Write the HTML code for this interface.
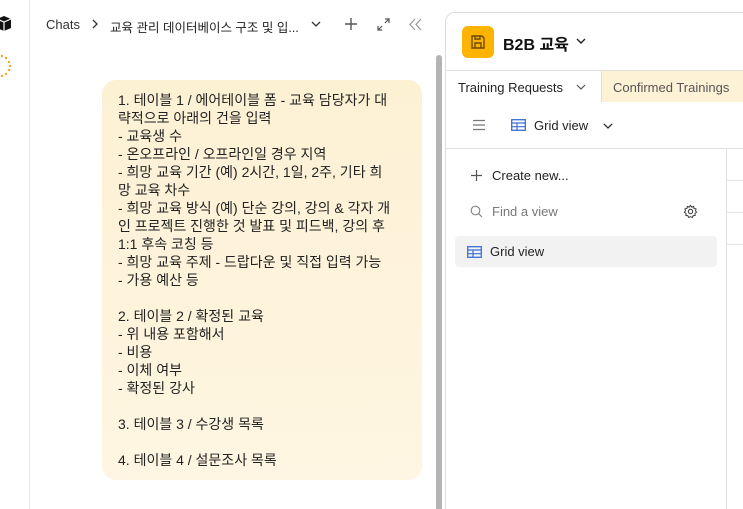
<!DOCTYPE html>
<html><head><meta charset="utf-8"><style>
*{margin:0;padding:0;box-sizing:border-box}
html,body{width:743px;height:509px;overflow:hidden}
body{background:#fff;font-family:"Liberation Sans","Noto Sans CJK KR",sans-serif;color:#1d1d1f;position:relative}
.abs{position:absolute}
.side{left:0;top:0;width:30px;height:509px;border-right:1px solid #e8e8e8;background:#fff}
.bubble{left:102px;top:80px;width:320px;height:400px;border-radius:14px;background:linear-gradient(180deg,#fdf1d4,#fef6e2);padding:11px 16px;font-size:14px;line-height:18px;color:#222;white-space:nowrap}
.right{left:445px;top:12px;width:310px;height:520px;border:1px solid #dcdcdc;border-radius:10px 0 0 0;background:#fff}
</style></head><body>
<div class="abs side">
<svg class="abs" style="left:-5px;top:14px" width="18" height="20" viewBox="0 0 18 20"><path d="M2 5 L9 2 L16 5 L16 14 L9 17 L2 14Z" fill="#111"/><path d="M2 5 L9 8 L16 5 M9 8 V17" stroke="#fff" stroke-width="1.2" fill="none"/></svg>
<svg class="abs" style="left:-4px;top:54px" width="20" height="24" viewBox="0 0 20 24"><g fill="#f5a623"><circle cx="6" cy="2" r="1.2"/><circle cx="10" cy="4" r="1.2"/><circle cx="13" cy="8" r="1.2"/><circle cx="14" cy="12" r="1.2"/><circle cx="13" cy="16" r="1.2"/><circle cx="10" cy="20" r="1.2"/><circle cx="6" cy="22" r="1.2"/></g></svg>
</div>
<div class="abs" style="left:46px;top:17px;font-size:13px;color:#333">Chats</div>
<svg class="abs" style="left:91px;top:19px" width="8" height="10"><path d="M2 1 L6 5 L2 9" stroke="#333" stroke-width="1.3" fill="none"/></svg>
<div class="abs" style="left:110px;top:17px;font-size:12.5px;color:#222;white-space:nowrap">교육 관리 데이터베이스 구조 및 입...</div>
<svg class="abs" style="left:311px;top:20px" width="10" height="8"><path d="M1 2 L5 6 L9 2" stroke="#333" stroke-width="1.3" fill="none"/></svg>
<svg class="abs" style="left:344px;top:17px" width="14" height="14"><path d="M7 1 V13 M1 7 H13" stroke="#555" stroke-width="1.4"/></svg>
<svg class="abs" style="left:377px;top:18px" width="13" height="13"><path d="M8 1 H12 V5 M12 1 L8 5 M5 12 H1 V8 M1 12 L5 8" stroke="#555" stroke-width="1.2" fill="none"/></svg>
<svg class="abs" style="left:409px;top:18px" width="13" height="13"><path d="M6 1 L1 6.5 L6 12 M12 1 L7 6.5 L12 12" stroke="#999" stroke-width="1.2" fill="none"/></svg>
<div class="abs" style="left:436px;top:55px;width:6px;height:454px;background:#b4b4b4;border-radius:3px 3px 0 0"></div>
<div class="abs bubble">1. 테이블 1 / 에어테이블 폼 - 교육 담당자가 대<br>략적으로 아래의 건을 입력<br>- 교육생 수<br>- 온오프라인 / 오프라인일 경우 지역<br>- 희망 교육 기간 (예) 2시간, 1일, 2주, 기타 희<br>망 교육 차수<br>- 희망 교육 방식 (예) 단순 강의, 강의 &amp; 각자 개<br>인 프로젝트 진행한 것 발표 및 피드백, 강의 후<br>1:1 후속 코칭 등<br>- 희망 교육 주제 - 드랍다운 및 직접 입력 가능<br>- 가용 예산 등<br><br>2. 테이블 2 / 확정된 교육<br>- 위 내용 포함해서<br>- 비용<br>- 이체 여부<br>- 확정된 강사<br><br>3. 테이블 3 / 수강생 목록<br><br>4. 테이블 4 / 설문조사 목록</div>
<div class="abs right">
<div class="abs" style="left:16px;top:13px;width:32px;height:32px;background:#fcb400;border-radius:6px"></div>
<svg class="abs" style="left:24px;top:21px" width="16" height="16" viewBox="0 0 16 16"><path d="M2 2 H12 L14 4 V14 H2Z M5 14 V9 H11 V14 M5 2 V5 H10 V2" stroke="#6b4a00" stroke-width="1.4" fill="none"/></svg>
<div class="abs" style="left:57px;top:18px;font-size:16px;font-weight:bold;color:#111">B2B 교육</div>
<svg class="abs" style="left:130px;top:25px" width="10" height="7"><path d="M1 1 L5 5 L9 1" stroke="#222" stroke-width="1.4" fill="none"/></svg>
<div class="abs" style="left:-1px;top:57px;width:310px;height:1px;background:#e0e0e0"></div>
<div class="abs" style="left:155px;top:58px;width:160px;height:31px;background:#fdf2d6;border-left:1px solid #eadfc0"></div>
<div class="abs" style="left:12px;top:67px;font-size:13px;color:#222">Training Requests</div>
<svg class="abs" style="left:130px;top:71px" width="10" height="7"><path d="M1 1 L5 5 L9 1" stroke="#555" stroke-width="1.2" fill="none"/></svg>
<div class="abs" style="left:167px;top:67px;font-size:13px;color:#555">Confirmed Trainings</div>
<svg class="abs" style="left:26px;top:106px" width="14" height="12"><path d="M1 1.5 H13 M1 6 H13 M1 10.5 H13" stroke="#777" stroke-width="1.3"/></svg>
<svg class="abs" style="left:65px;top:106px" width="15" height="12"><rect x="0.7" y="0.7" width="13.6" height="10.6" fill="none" stroke="#3b6fd6" stroke-width="1.3"/><path d="M1 4 H14 M1 7.7 H14 M6 4 V11" stroke="#3b6fd6" stroke-width="1.2"/></svg>
<div class="abs" style="left:88px;top:105px;font-size:13px;color:#222">Grid view</div>
<svg class="abs" style="left:157px;top:110px" width="10" height="7"><path d="M1 1 L5 5 L9 1" stroke="#333" stroke-width="1.3" fill="none"/></svg>
<div class="abs" style="left:-1px;top:135px;width:310px;height:1px;background:#e0e0e0"></div>
<div class="abs" style="left:280px;top:136px;width:1px;height:380px;background:#e0e0e0"></div>
<div class="abs" style="left:281px;top:167px;width:30px;height:1px;background:#e4e4e4"></div>
<div class="abs" style="left:281px;top:199px;width:30px;height:1px;background:#e4e4e4"></div>
<div class="abs" style="left:281px;top:231px;width:30px;height:1px;background:#e4e4e4"></div>
<svg class="abs" style="left:25px;top:157px" width="11" height="11"><path d="M5.5 0 V11 M0 5.5 H11" stroke="#555" stroke-width="1.2"/></svg>
<div class="abs" style="left:46px;top:155px;font-size:13px;color:#222">Create new...</div>
<svg class="abs" style="left:24px;top:192px" width="13" height="13"><circle cx="5.5" cy="5.5" r="4.3" stroke="#888" stroke-width="1.2" fill="none"/><path d="M8.7 8.7 L12 12" stroke="#888" stroke-width="1.2"/></svg>
<div class="abs" style="left:46px;top:191px;font-size:13px;color:#777">Find a view</div>
<svg class="abs" style="left:237px;top:191px" width="15" height="15" viewBox="0 0 16 16"><circle cx="8" cy="8" r="2.3" fill="none" stroke="#444" stroke-width="1.2"/><path d="M8 1.5 L9.3 3.2 L11.4 2.6 L11.8 4.7 L13.9 5.2 L13.3 7.2 L14.5 8.8 L12.8 10 L13 12.2 L10.9 12.4 L10 14.4 L8 13.5 L6 14.4 L5.1 12.4 L3 12.2 L3.2 10 L1.5 8.8 L2.7 7.2 L2.1 5.2 L4.2 4.7 L4.6 2.6 L6.7 3.2Z" fill="none" stroke="#444" stroke-width="1.1"/></svg>
<div class="abs" style="left:9px;top:223px;width:262px;height:31px;background:#f2f2f2;border-radius:4px"></div>
<svg class="abs" style="left:21px;top:233px" width="15" height="12"><rect x="0.7" y="0.7" width="13.6" height="10.6" fill="none" stroke="#3b6fd6" stroke-width="1.3"/><path d="M1 4 H14 M1 7.7 H14 M6 4 V11" stroke="#3b6fd6" stroke-width="1.2"/></svg>
<div class="abs" style="left:44px;top:231px;font-size:13px;color:#222">Grid view</div>
</div>
</body></html>
